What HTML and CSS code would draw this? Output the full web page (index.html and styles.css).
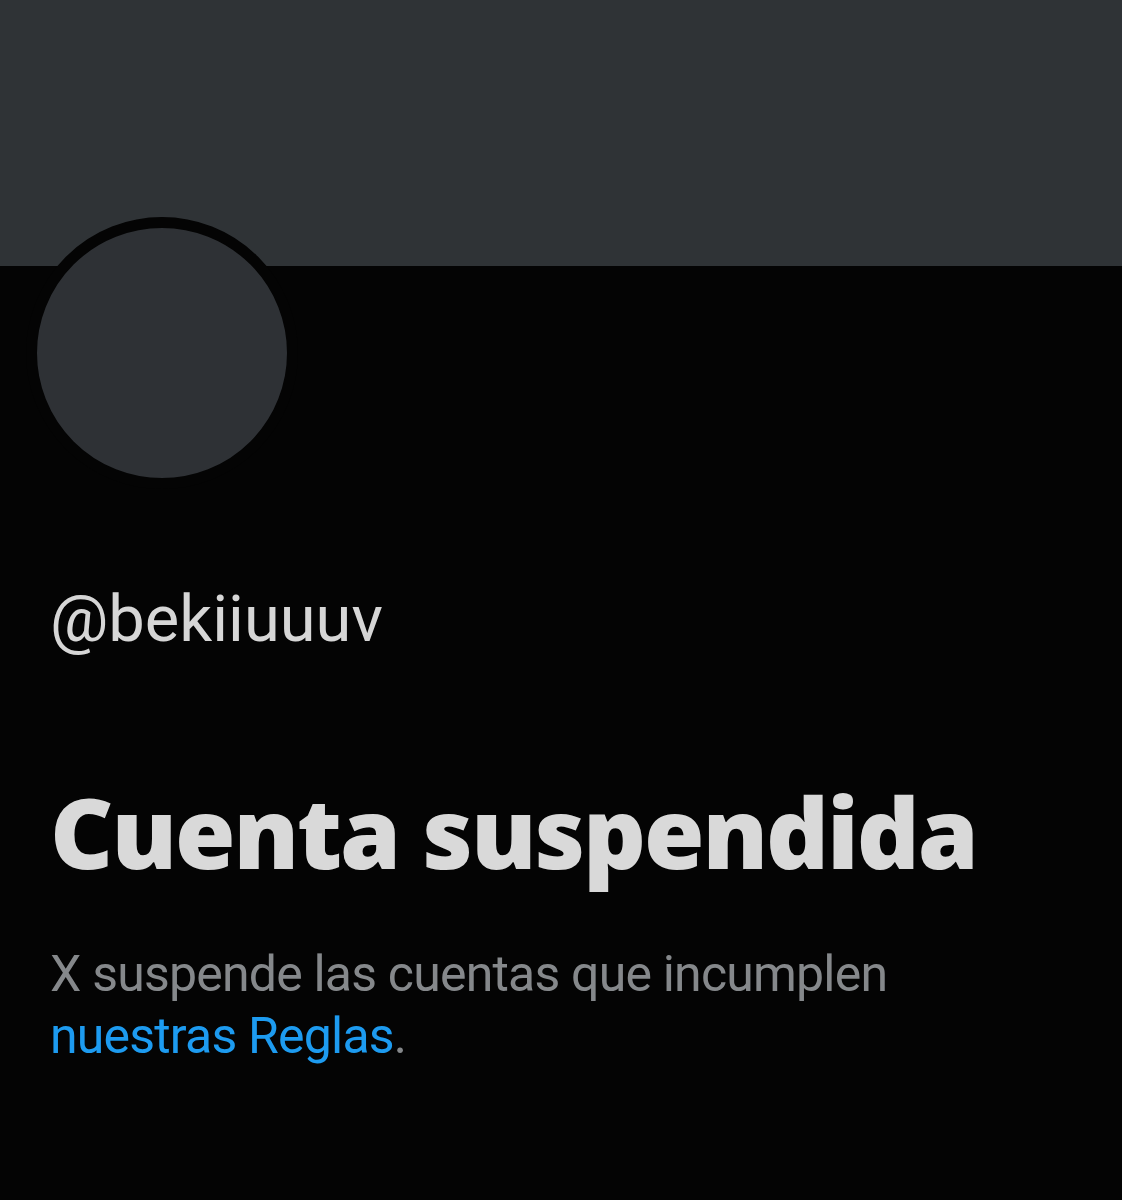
FILE: index.html
```html
<!DOCTYPE html>
<html lang="es">
<head>
<meta charset="utf-8">
<link rel="stylesheet" href="styles.css">
</head>
<body>
<div class="page">
  <div class="banner"></div>
  <div class="profile">
    <div class="avatar-row">
      <div class="avatar"></div>
    </div>
    <div class="handle">@bekiiuuuv</div>
    <h1 class="title">Cuenta suspendida</h1>
    <p class="desc">X suspende las cuentas que incumplen <a class="link" href="#">nuestras Reglas</a>.</p>
  </div>
</div>
</body>
</html>
```
FILE: styles.css
```css
html, body {
  margin: 0;
  padding: 0;
  background: #040404;
}
.page {
  width: 1122px;
  height: 1200px;
  background: #040404;
  overflow: hidden;
  font-family: Roboto, "Liberation Sans", sans-serif;
}
.banner {
  height: 266px;
  background: #2f3336;
}
.profile {
  padding: 0 50px;
}
.avatar-row {
  margin-top: -49px;
  margin-left: -24px;
}
.avatar {
  width: 250px;
  height: 250px;
  border-radius: 50%;
  background: #2e3135;
  border: 11px solid #040404;
}
.handle {
  margin-top: 90px;
  font-size: 65px;
  line-height: 80px;
  color: #d6d6d6;
}
.title {
  margin: 112px 0 0;
  font-family: "Open Sans", Roboto, sans-serif;
  font-size: 98px;
  line-height: 120px;
  font-weight: 800;
  letter-spacing: -2.1px;
  color: #d9d9d9;
}
.desc {
  max-width: 880px;
  margin: 52px 0 0;
  font-size: 50px;
  line-height: 62px;
  color: #85888b;
  letter-spacing: -0.8px;
}
.link {
  color: #1d9bf0;
  text-decoration: none;
}
```
